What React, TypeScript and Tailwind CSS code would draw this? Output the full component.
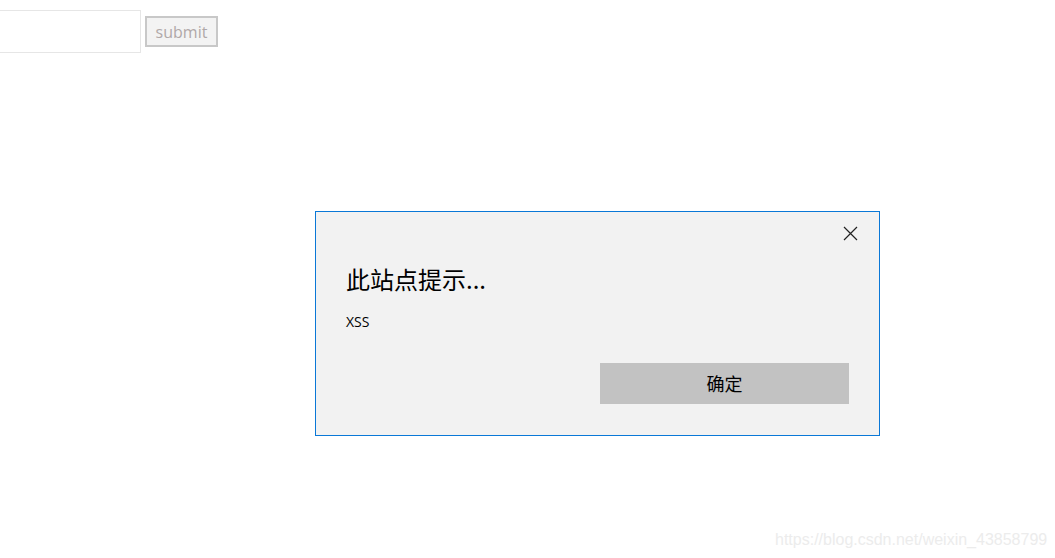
import React from 'react';

export default function App() {
  return (
    <div className="relative w-[1055px] h-[558px] bg-white overflow-hidden" style={{ fontFamily: '"Open Sans", "Noto Sans CJK SC", sans-serif' }}>
      {/* form */}
      <div className="flex items-start pt-[10px]">
        <input className="-ml-[10px] w-[151px] h-[43px] border border-[#e6e6e6] bg-white outline-none" />
        <button className="ml-[4px] mt-[6px] w-[73px] h-[31px] border-2 border-[#c8c8c8] bg-[#f3f3f3] text-[16px] leading-none text-[#b0a8a8]">
          submit
        </button>
      </div>

      {/* alert dialog */}
      <div className="absolute left-[315px] top-[211px] w-[565px] h-[225px] border border-[#0a78d7] bg-[#f2f2f2]">
        <div className="flex justify-end pt-[14px] pr-[21px]">
          <svg width="15" height="15" viewBox="0 0 15 15" className="text-[#222]">
            <path d="M1 1 L14 14 M14 1 L1 14" stroke="currentColor" strokeWidth="1.2" fill="none" />
          </svg>
        </div>
        <div className="pl-[30px] pt-[23px]">
          <div className="text-[24px] leading-[30px] text-black" style={{ fontFamily: '"Noto Sans CJK SC", sans-serif' }}>此站点提示...</div>
          <div className="mt-[19px] text-[14px] leading-[18px] text-black">XSS</div>
        </div>
        <div className="flex justify-end pr-[30px] mt-[32px]">
          <button className="w-[249px] h-[41px] bg-[#c2c2c2] text-[18px] text-black" style={{ fontFamily: '"Noto Sans CJK SC", sans-serif' }}>
            确定
          </button>
        </div>
      </div>

      {/* watermark */}
      <div className="absolute left-[775px] top-[529px] text-[16px] leading-[22px] text-[#ececec] whitespace-nowrap" style={{ fontFamily: '"Liberation Sans", Arial, sans-serif' }}>
        https://blog.csdn.net/weixin_43858799
      </div>
    </div>
  );
}
